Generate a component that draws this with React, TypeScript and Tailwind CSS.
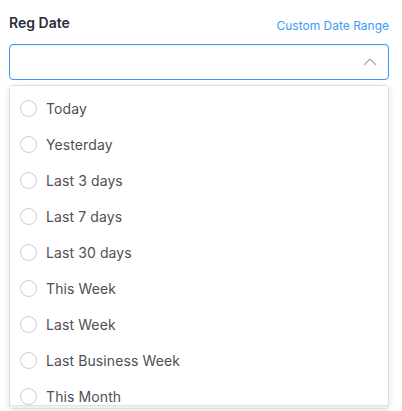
import React from "react";

const items = [
  "Today",
  "Yesterday",
  "Last 3 days",
  "Last 7 days",
  "Last 30 days",
  "This Week",
  "Last Week",
  "Last Business Week",
  "This Month",
];

export default function App() {
  return (
    <div
      className="w-[402px] h-[411px] bg-white overflow-hidden"
      style={{ fontFamily: "Inter, 'Noto Sans', sans-serif" }}
    >
      <div className="pl-[9px] pr-[13px] pt-[13px]">
        <div className="flex items-end justify-between h-[20px]">
          <span className="text-[14px] font-semibold text-[#2b2d3a] leading-[20px]">Reg Date</span>
          <span className="text-[12px] text-[#3d9bf5] leading-[16px] mb-[-1px]">Custom Date Range</span>
        </div>
        <div className="mt-[11px] h-[36px] border border-[#3a97f4] rounded-[4px] flex items-center justify-end pr-[11px] shadow-[inset_0_1px_2px_rgba(0,0,0,0.05)]">
          <svg width="14" height="8" viewBox="0 0 14 8" fill="none">
            <path d="M1 7L7 1L13 7" stroke="#a9a9b3" strokeWidth="1.2" />
          </svg>
        </div>
        <div className="mt-[5px] h-[324px] border border-[#dedede] rounded-[4px] shadow-[0_2px_6px_rgba(0,0,0,0.12)] overflow-hidden flex flex-col">
          <div className="flex-1 overflow-hidden pt-[4px] bg-white">
            {items.map((it) => (
              <div key={it} className="h-[36px] flex items-center pl-[10px]">
                <span className="w-[17px] h-[17px] rounded-full border border-[#c9c9cf] bg-white shrink-0" />
                <span className="ml-[9px] text-[14px] text-[#4f4f55] tracking-[0.1px]">{it}</span>
              </div>
            ))}
          </div>
          <div className="h-[3px] bg-[#f0f0f2] border-t border-[#e2e2e5] shrink-0" />
        </div>
      </div>
    </div>
  );
}
